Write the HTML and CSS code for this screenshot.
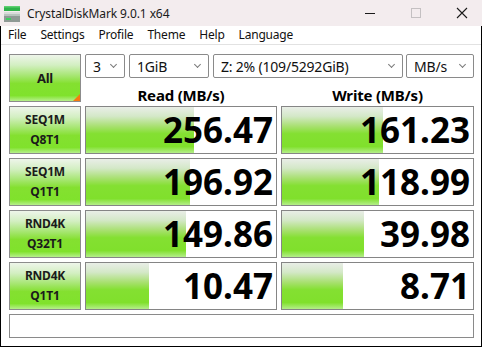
FILE: index.html
```html
<!DOCTYPE html>
<html>
<head>
<meta charset="utf-8">
<title>CrystalDiskMark 9.0.1 x64</title>
<link rel="stylesheet" href="styles.css">
</head>
<body>
<div class="titlebar">
  <svg class="appicon" width="16" height="16" viewBox="0 0 16 16">
    <rect x="0" y="0" width="16" height="5" fill="#2fb24a"/>
    <rect x="0" y="0" width="16" height="1.5" fill="#5fd070"/>
    <rect x="0" y="6" width="16" height="2" fill="#d9dcda"/>
    <rect x="0" y="8" width="16" height="8" fill="#8f9a95"/>
    <rect x="0" y="8" width="16" height="2" fill="#b8c4be"/>
    <rect x="2" y="12" width="5" height="2" fill="#3cd060"/>
  </svg>
  <span class="title">CrystalDiskMark 9.0.1 x64</span>
  <div class="controls">
    <svg class="ctl" width="46" height="26" viewBox="0 0 46 26"><rect x="18" y="13" width="10" height="1" fill="#1a1a1a"/></svg>
    <svg class="ctl" width="46" height="26" viewBox="0 0 46 26"><rect x="18.5" y="8.5" width="9" height="9" fill="none" stroke="#c4c0c2"/></svg>
    <svg class="ctl" width="46" height="26" viewBox="0 0 46 26"><path d="M18 8 L28 18 M28 8 L18 18" stroke="#1a1a1a" stroke-width="1.1" fill="none"/></svg>
  </div>
</div>
<div class="window">
  <div class="menubar">
    <span class="mi">File</span>
    <span class="mi">Settings</span>
    <span class="mi">Profile</span>
    <span class="mi">Theme</span>
    <span class="mi">Help</span>
    <span class="mi">Language</span>
  </div>
  <div class="content">
    <div class="grid">
      <div class="btn all">All<span class="corner"></span></div>
      <div class="combos">
        <div class="combo c1"><span>3</span><i class="chev"></i></div>
        <div class="combo c2"><span>1GiB</span><i class="chev"></i></div>
        <div class="combo c3"><span>Z: 2% (109/5292GiB)</span><i class="chev"></i></div>
        <div class="combo c4"><span>MB/s</span><i class="chev"></i></div>
      </div>
      <div class="head read">Read (MB/s)</div>
      <div class="head write">Write (MB/s)</div>

      <div class="btn lbl">SEQ1M<br>Q8T1</div>
      <div class="cell" style="--w:108px">256.47</div>
      <div class="cell" style="--w:101px">161.23</div>

      <div class="btn lbl">SEQ1M<br>Q1T1</div>
      <div class="cell" style="--w:104px">196.92</div>
      <div class="cell" style="--w:97px">118.99</div>

      <div class="btn lbl">RND4K<br>Q32T1</div>
      <div class="cell" style="--w:100px">149.86</div>
      <div class="cell" style="--w:82px">39.98</div>

      <div class="btn lbl">RND4K<br>Q1T1</div>
      <div class="cell" style="--w:63px">10.47</div>
      <div class="cell" style="--w:61px">8.71</div>

      <div class="comment"></div>
    </div>
  </div>
</div>
</body>
</html>
```
FILE: styles.css
```css
* { box-sizing: border-box; }
html, body { margin: 0; padding: 0; }
body {
  width: 482px;
  height: 347px;
  overflow: hidden;
  font-family: "Noto Sans", "Open Sans", sans-serif;
  color: #000;
  background: #fff;
}
.titlebar {
  height: 26px;
  background: #f3ecee;
  display: flex;
  align-items: center;
  padding-left: 4px;
}
.appicon { flex: none; margin-top: 1px; }
.title {
  margin-left: 7px;
  font-size: 12px;
  color: #1a1a1a;
  flex: 1;
  letter-spacing: -0.1px;
}
.controls { display: flex; align-self: stretch; margin-right: -3px; }
.ctl { display: block; }
.window {
  height: 321px;
  border: 1px solid #000;
  border-top: none;
  display: flex;
  flex-direction: column;
}
.menubar {
  height: 19px;
  border-bottom: 1px solid #e2e2e2;
  display: flex;
  align-items: center;
  font-size: 12px;
  letter-spacing: -0.2px;
}
.mi { padding: 0 7px; color: #111; line-height: 18px; }
.content {
  padding: 9px 8px 0 8px;
}
.grid {
  display: grid;
  grid-template-columns: 72px 192px 193px;
  grid-template-rows: 24px 20px 48px 48px 48px 48px 24px;
  column-gap: 4px;
  row-gap: 4px;
}
.btn {
  border: 1px solid #8c8c8c;
  background: linear-gradient(to bottom, #eef5ea 0%, #d3efc2 22%, #a6e671 45%, #84e030 62%, #80e22c 88%, #b6f08c 100%);
  font-weight: 700;
  color: #1b1b1b;
  display: flex;
  align-items: center;
  justify-content: center;
  text-align: center;
}
.all {
  grid-row: 1 / span 2;
  font-size: 13px;
  position: relative;
  letter-spacing: -0.3px;
}
.corner {
  position: absolute;
  right: 0;
  bottom: 0;
  width: 0;
  height: 0;
  border-left: 7px solid transparent;
  border-bottom: 7px solid #f77a10;
}
.combos {
  grid-column: 2 / span 2;
  display: flex;
}
.combo {
  height: 24px;
  border: 1px solid #8a8a8a;
  border-radius: 2px;
  background: #fff;
  display: flex;
  align-items: center;
  padding-left: 7px;
  font-size: 14px;
  color: #111;
}
.combo span { flex: 1; white-space: nowrap; letter-spacing: -0.2px; }
.c1 { width: 40px; margin-right: 4px; }
.c2 { width: 80px; margin-right: 4px; }
.c3 { width: 190px; margin-right: 3px; }
.c4 { width: 68px; }
.chev {
  width: 5px;
  height: 5px;
  border-right: 1px solid #7a7a7a;
  border-bottom: 1px solid #7a7a7a;
  transform: rotate(45deg);
  margin: 0 8px 3px 0;
  flex: none;
}
.head {
  grid-row: 2;
  font-size: 15px;
  font-weight: 700;
  text-align: center;
  line-height: 20px;
  padding-top: 3px;
  letter-spacing: -0.2px;
}
.read { grid-column: 2; }
.write { grid-column: 3; }
.lbl {
  grid-column: 1;
  font-size: 12px;
  line-height: 20px;
  letter-spacing: -0.2px;
}
.cell {
  border: 1px solid #858585;
  background: #fff linear-gradient(to bottom, #e9eee7 0%, #d4e8c8 20%, #a8e070 42%, #84e032 58%, #80e02c 86%, #b4ee8a 100%) no-repeat;
  background-size: var(--w) 100%;
  text-align: right;
  font-size: 35px;
  font-weight: 700;
  line-height: 46px;
  padding-right: 3px;
}
.comment {
  grid-column: 1 / span 3;
  border: 1px solid #8a8a8a;
  background: #fff;
}
```
